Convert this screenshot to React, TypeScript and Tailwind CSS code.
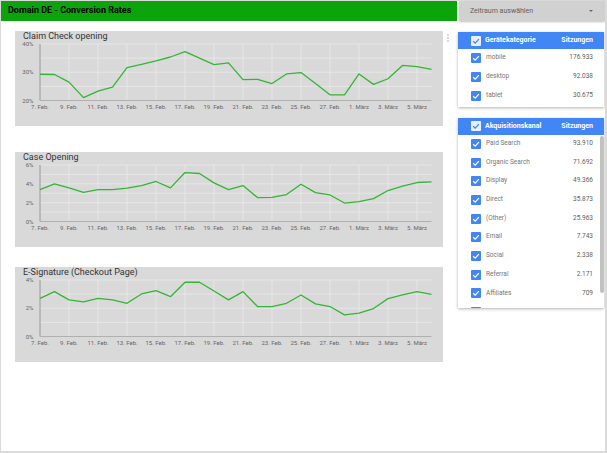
import React from 'react';

const DATES = [
  '7. Feb.', '9. Feb.', '11. Feb.', '13. Feb.', '15. Feb.', '17. Feb.', '19. Feb.',
  '21. Feb.', '23. Feb.', '25. Feb.', '27. Feb.', '1. März', '3. März', '5. März',
];

const CLAIM = [29.3, 29.2, 26.5, 21.0, 23.3, 24.7, 31.6, 32.8, 34.0, 35.4, 37.3, 35.0, 32.7, 33.3, 27.4, 27.5, 26.0, 29.4, 29.9, 26.0, 22.0, 22.0, 29.4, 25.7, 27.7, 32.4, 32.0, 31.0];
const CASE = [3.39, 4.0, 3.57, 3.1, 3.39, 3.39, 3.54, 3.82, 4.25, 3.57, 5.2, 5.1, 4.1, 3.39, 3.82, 2.54, 2.57, 2.86, 3.96, 3.07, 2.82, 1.96, 2.1, 2.43, 3.29, 3.75, 4.14, 4.21];
const ESIGN = [2.7, 3.18, 2.59, 2.45, 2.7, 2.59, 2.35, 3.01, 3.25, 2.82, 3.84, 3.84, 3.22, 2.59, 3.18, 2.12, 2.12, 2.35, 2.94, 2.31, 2.12, 1.53, 1.65, 1.98, 2.68, 2.94, 3.18, 2.99];

const DEVICES = [
  { name: 'mobile', value: '176.933' },
  { name: 'desktop', value: '92.038' },
  { name: 'tablet', value: '30.675' },
];

const CHANNELS = [
  { name: 'Paid Search', value: '93.910' },
  { name: 'Organic Search', value: '71.692' },
  { name: 'Display', value: '49.366' },
  { name: 'Direct', value: '35.873' },
  { name: '(Other)', value: '25.963' },
  { name: 'Email', value: '7.743' },
  { name: 'Social', value: '2.338' },
  { name: 'Referral', value: '2.171' },
  { name: 'Affiliates', value: '709' },
];

// plot geometry inside the svg (svg sits 12px below the card top)
const X0 = 25;
const STEP = 14.5;
const TOP = 1;
const BOTTOM = 57.5;

interface ChartProps {
  title: string;
  data: number[];
  min: number;
  max: number;
  grid: number;
  label: number;
}

const LineChart: React.FC<ChartProps> = ({ title, data, min, max, grid, label }) => {
  const y = (v: number) => BOTTOM - ((v - min) / (max - min)) * (BOTTOM - TOP);
  const xEnd = X0 + (data.length - 1) * STEP;
  const gridVals: number[] = [];
  for (let v = min; v <= max + 0.001; v += grid) gridVals.push(v);
  const points = data.map((v, i) => `${X0 + i * STEP},${y(v).toFixed(2)}`).join(' ');

  return (
    <div className="w-[428px] h-[95px] bg-[#d9d9d9] flex flex-col">
      <div className="h-[12px] pl-[8px] pt-[1px] text-[9px] leading-[9px] text-[#333]">{title}</div>
      <svg width={428} height={83} viewBox="0 0 428 83" className="overflow-visible">
        {DATES.map((_, i) => (
          <line key={i} x1={X0 + i * 2 * STEP} x2={X0 + i * 2 * STEP} y1={TOP} y2={BOTTOM} stroke="#e6e6e6" strokeWidth={1} />
        ))}
        {gridVals.map(v => (
          <line key={v} x1={X0} x2={xEnd} y1={y(v)} y2={y(v)} stroke="#e6e6e6" strokeWidth={1} />
        ))}
        <line x1={X0} x2={X0} y1={TOP} y2={BOTTOM} stroke="#9e9e9e" strokeWidth={1.2} />
        <line x1={X0} x2={xEnd} y1={BOTTOM} y2={BOTTOM} stroke="#b0b0b0" strokeWidth={1} />
        {gridVals.filter(v => Math.abs((v - min) % label) < 0.001).map(v => (
          <text key={v} x={18.5} y={y(v) + 0.5} fontSize={6} fill="#666" textAnchor="end" dominantBaseline="middle">
            {Math.round(v)}%
          </text>
        ))}
        {DATES.map((d, i) => (
          <text key={d} x={X0 + i * 2 * STEP} y={64.5} fontSize={6} fill="#666" textAnchor="middle" dominantBaseline="middle">
            {d}
          </text>
        ))}
        <polyline points={points} fill="none" stroke="#33b633" strokeWidth={1.3} strokeLinejoin="round" />
      </svg>
    </div>
  );
};

const Check: React.FC<{ light?: boolean }> = ({ light }) => (
  <span className={`w-[10px] h-[10px] rounded-[1px] flex items-center justify-center shrink-0 ${light ? 'bg-[#e8effd]' : 'bg-[#4285f4]'}`}>
    <svg width={10} height={10} viewBox="0 0 10 10">
      <path d="M2.2 5.2 L4.2 7.1 L7.9 3.1" fill="none" stroke={light ? '#4285f4' : '#fff'} strokeWidth={1.3} />
    </svg>
  </span>
);

const TableHeader: React.FC<{ title: string }> = ({ title }) => (
  <div className="h-[17px] bg-[#4285f4] flex items-center pl-[13px] pr-[11px] text-white font-bold text-[7px]">
    <Check light />
    <span className="ml-[4px]">{title}</span>
    <span className="ml-auto">Sitzungen</span>
  </div>
);

const Row: React.FC<{ name: string; value: string }> = ({ name, value }) => (
  <div className="h-[18.7px] flex items-center pl-[13px] pr-[11px] text-[6.5px]">
    <Check />
    <span className="ml-[5px] text-[#757575]">{name}</span>
    <span className="ml-auto text-[#616161]">{value}</span>
  </div>
);

export default function App() {
  return (
    <div className="w-[607px] h-[453px] bg-white border-l border-t border-r-2 border-b-2 border-[#dadada] flex font-['Roboto',sans-serif] overflow-hidden">
      <div className="w-[457px] flex flex-col">
        <div className="w-[456px] h-[20px] bg-[#0ba50b] flex items-center pl-[7px] text-[9px] font-bold text-black">
          Domain DE - Conversion Rates
        </div>
        <div className="pl-[14px] pt-[10px] flex flex-col">
          <div className="flex">
            <LineChart title="Claim Check opening" data={CLAIM} min={20} max={40} grid={5} label={10} />
            <div className="ml-[4px] mt-[3px] flex flex-col gap-[1.5px]">
              <span className="w-[1.5px] h-[1.5px] rounded-full bg-[#cfcfcf]" />
              <span className="w-[1.5px] h-[1.5px] rounded-full bg-[#cfcfcf]" />
              <span className="w-[1.5px] h-[1.5px] rounded-full bg-[#cfcfcf]" />
            </div>
          </div>
          <div className="mt-[26px]">
            <LineChart title="Case Opening" data={CASE} min={0} max={6} grid={1} label={2} />
          </div>
          <div className="mt-[20px]">
            <LineChart title="E-Signature (Checkout Page)" data={ESIGN} min={0} max={4} grid={1} label={2} />
          </div>
        </div>
      </div>

      <div className="w-[147px] flex flex-col">
        <div className="ml-[1px] h-[20px] bg-[#d1d1d1] shadow-[0_1px_2px_rgba(0,0,0,0.25)] flex items-center pl-[11px] pr-[12px] text-[7px] text-[#616161]">
          <span>Zeitraum auswählen</span>
          <svg width={4} height={2} viewBox="0 0 4 2" className="ml-auto">
            <path d="M0 0 L4 0 L2 2 Z" fill="#666" />
          </svg>
        </div>

        <div className="mt-[11px] mr-[1px] bg-white shadow-[0_1px_3px_rgba(0,0,0,0.3)] pb-[1.5px]">
          <TableHeader title="Gerätekategorie" />
          {DEVICES.map(d => (
            <Row key={d.name} name={d.name} value={d.value} />
          ))}
        </div>

        <div className="relative mt-[11px] mr-[1px] bg-white shadow-[0_1px_3px_rgba(0,0,0,0.3)]">
          <TableHeader title="Akquisitionskanal" />
          <div className="h-[173px] overflow-hidden">
            {CHANNELS.map(c => (
              <Row key={c.name} name={c.name} value={c.value} />
            ))}
            {/* next row peeks in below the fold */}
            <div className="h-[18.7px] flex items-center pl-[13px]">
              <Check />
            </div>
          </div>
          <div className="absolute right-0 top-[18px] w-[4px] h-[157px] rounded-[2px] bg-[#c1c1c1]" />
        </div>
      </div>
    </div>
  );
}
